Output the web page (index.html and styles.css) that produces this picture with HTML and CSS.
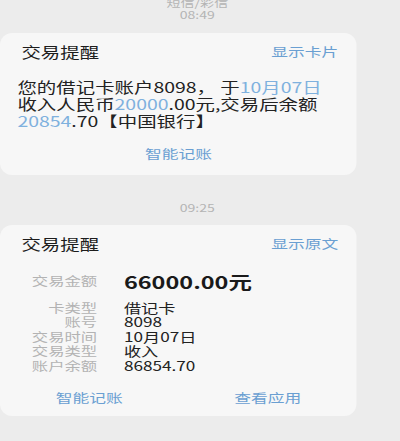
FILE: index.html
```html
<!DOCTYPE html>
<html lang="zh-CN">
<head>
<meta charset="utf-8">
<title>交易提醒</title>
<link rel="stylesheet" href="styles.css">
</head>
<body>
<div class="screen">
  <div class="stamp stamp-top">
    <div class="stamp-type">短信/彩信</div>
    <div class="stamp-time">08:49</div>
  </div>

  <div class="card card-sms">
    <div class="card-head">
      <span class="card-title">交易提醒</span>
      <span class="link">显示卡片</span>
    </div>
    <p class="sms-body">您的借记卡账户8098， 于<span class="hl">10月07日</span><br>收入人民币<span class="hl">20000</span>.00元,交易后余额<br><span class="hl">20854</span>.70【中国银行】</p>
    <div class="actions single">
      <span class="link">智能记账</span>
    </div>
  </div>

  <div class="stamp stamp-mid">
    <div class="stamp-time">09:25</div>
  </div>

  <div class="card card-detail">
    <div class="card-head">
      <span class="card-title">交易提醒</span>
      <span class="link">显示原文</span>
    </div>
    <div class="amount-row">
      <span class="label">交易金额</span>
      <span class="amount">66000.00元</span>
    </div>
    <div class="details">
      <span class="label">卡类型</span><span class="value">借记卡</span>
      <span class="label">账号</span><span class="value">8098</span>
      <span class="label">交易时间</span><span class="value">10月07日</span>
      <span class="label">交易类型</span><span class="value">收入</span>
      <span class="label">账户余额</span><span class="value">86854.70</span>
    </div>
    <div class="actions">
      <span class="link">智能记账</span>
      <span class="link">查看应用</span>
    </div>
  </div>
</div>
</body>
</html>
```

FILE: styles.css
```css
html, body {
  margin: 0;
  padding: 0;
  background: #ececec;
  overflow: hidden;
  height: 441px;
}

body {
  font-family: "Noto Sans CJK SC", "Noto Sans", sans-serif;
  color: #1f1f1f;
}

.screen {
  width: 298.5px;
  transform: scaleX(1.34);
  transform-origin: 0 0;
}

.stamp {
  text-align: center;
  color: #b4b4b4;
  font-size: 10.5px;
  padding-right: 4px;
}

.stamp-top {
  margin-top: -3px;
}

.stamp-type {
  line-height: 11px;
}

.stamp-time {
  line-height: 14px;
}

.stamp-mid {
  margin-top: 26px;
}

.card {
  width: 266.4px;
  box-sizing: border-box;
  background: #f7f7f7;
  border-radius: 9px / 12px;
  padding: 0 14px 0 13px;
}

.card-sms {
  margin-top: 11px;
  padding-top: 8.5px;
  padding-bottom: 12px;
}

.card-detail {
  margin-top: 10px;
  padding-top: 9px;
  padding-bottom: 9px;
}

.card-head {
  display: flex;
  justify-content: space-between;
  align-items: center;
  height: 20px;
}

.card-title {
  font-size: 14.5px;
  font-weight: 400;
  line-height: 20px;
  margin-left: 3px;
  color: #1c1c1c;
}

.link {
  color: #6a9fd2;
  font-size: 12.5px;
  line-height: 18px;
}

.sms-body {
  margin: 16px 0 0;
  font-size: 14.5px;
  line-height: 17px;
  color: #222;
  white-space: nowrap;
}

.hl {
  color: #7fb1de;
}

.actions {
  display: flex;
  margin: 16.5px -14px 0 -13px;
}

.actions .link {
  flex: 1;
  text-align: center;
}

.amount-row {
  display: grid;
  grid-template-columns: 59.5px auto;
  column-gap: 20px;
  align-items: center;
  margin-top: 15.5px;
  height: 24px;
}

.details {
  display: grid;
  grid-template-columns: 59.5px auto;
  column-gap: 20px;
  margin-top: 7px;
  line-height: 14.5px;
}

.label {
  text-align: right;
  font-size: 12.2px;
  color: #b3b3b3;
  line-height: 14.5px;
}

.amount {
  font-size: 17.5px;
  font-weight: 700;
  line-height: 24px;
  color: #1a1a1a;
}

.value {
  font-size: 12.8px;
  color: #222;
}

.card-detail .actions {
  margin-top: 16px;
}
```
